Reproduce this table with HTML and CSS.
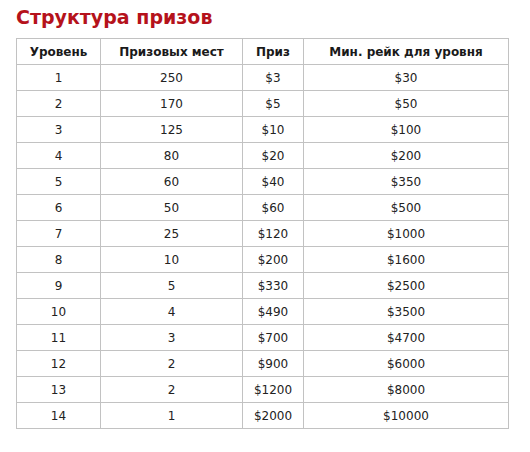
FILE: index.html
```html
<!DOCTYPE html>
<html lang="ru">
<head>
<meta charset="utf-8">
<link rel="stylesheet" href="styles.css">
</head>
<body>
<h2 class="title">Структура призов</h2>
<table class="prizes">
<thead>
<tr><th>Уровень</th><th>Призовых мест</th><th>Приз</th><th>Мин. рейк для уровня</th></tr>
</thead>
<tbody>
<tr><td>1</td><td>250</td><td>$3</td><td>$30</td></tr>
<tr><td>2</td><td>170</td><td>$5</td><td>$50</td></tr>
<tr><td>3</td><td>125</td><td>$10</td><td>$100</td></tr>
<tr><td>4</td><td>80</td><td>$20</td><td>$200</td></tr>
<tr><td>5</td><td>60</td><td>$40</td><td>$350</td></tr>
<tr><td>6</td><td>50</td><td>$60</td><td>$500</td></tr>
<tr><td>7</td><td>25</td><td>$120</td><td>$1000</td></tr>
<tr><td>8</td><td>10</td><td>$200</td><td>$1600</td></tr>
<tr><td>9</td><td>5</td><td>$330</td><td>$2500</td></tr>
<tr><td>10</td><td>4</td><td>$490</td><td>$3500</td></tr>
<tr><td>11</td><td>3</td><td>$700</td><td>$4700</td></tr>
<tr><td>12</td><td>2</td><td>$900</td><td>$6000</td></tr>
<tr><td>13</td><td>2</td><td>$1200</td><td>$8000</td></tr>
<tr><td>14</td><td>1</td><td>$2000</td><td>$10000</td></tr>
</tbody>
</table>
</body>
</html>
```
FILE: styles.css
```css
html, body {
  margin: 0;
  padding: 0;
  background: #fff;
}
body {
  padding: 6px 22px 0 16px;
  font-family: "DejaVu Sans", sans-serif;
  color: #222;
}
.title {
  margin: 0 0 10px 0;
  font-size: 19px;
  line-height: 22px;
  font-weight: bold;
  color: #b5121b;
}
.prizes {
  border-collapse: collapse;
  width: 493px;
  font-size: 12px;
}
.prizes th, .prizes td {
  border: 1px solid #c2c2c2;
  height: 25px;
  padding: 0;
  text-align: center;
}
.prizes th {
  font-weight: bold;
  color: #1a1a1a;
}
.prizes th:nth-child(1) { width: 83px; }
.prizes th:nth-child(2) { width: 141px; }
.prizes th:nth-child(3) { width: 60px; }
```
